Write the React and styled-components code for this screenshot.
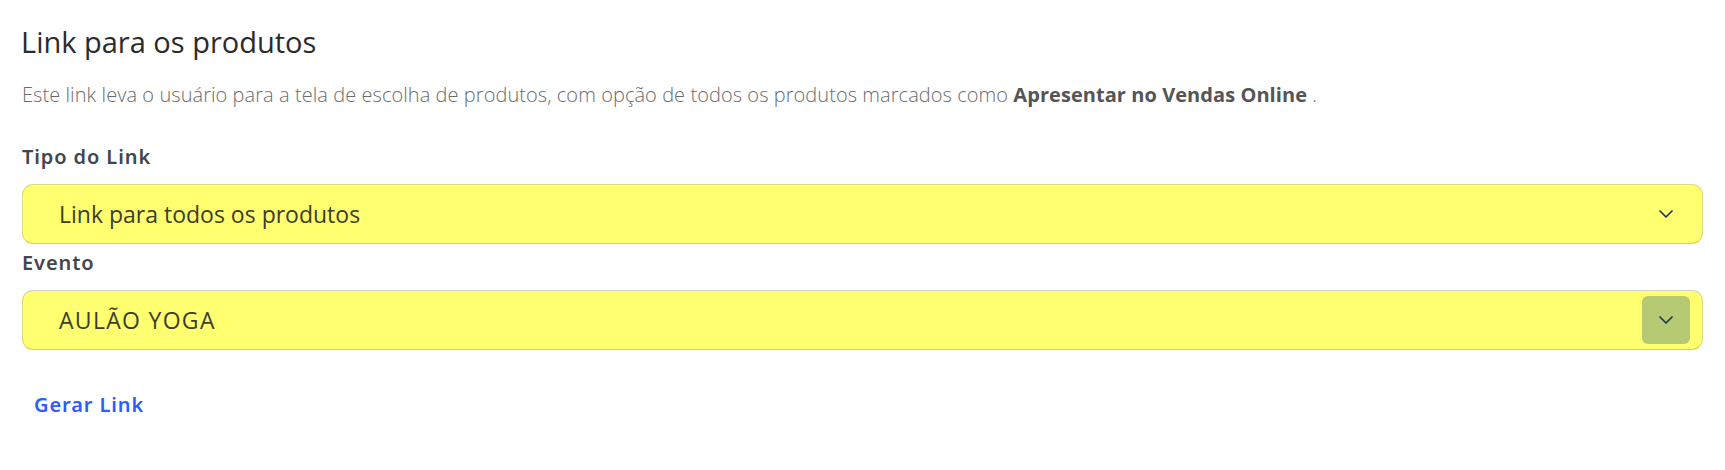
import React from "react";
import styled, { createGlobalStyle } from "styled-components";

const Global = createGlobalStyle`
  html, body { margin: 0; padding: 0; background: #ffffff; }
  * { box-sizing: border-box; }
`;

const Page = styled.div`
  padding: 25px 22px 40px 22px;
  font-family: "Open Sans", "Liberation Sans", sans-serif;
`;

const Title = styled.h2`
  margin: 0 0 0 -1px;
  font-size: 29px;
  line-height: 34px;
  font-weight: 400;
  color: #2b2b2b;
`;

const Description = styled.p`
  margin: 22px 0 0 0;
  font-size: 20px;
  line-height: 27px;
  font-weight: 300;
  letter-spacing: 0.06px;
  color: #6b6b6b;

  strong {
    font-weight: 700;
    color: #555555;
  }
`;

const Field = styled.div`
  display: flex;
  flex-direction: column;
  margin-top: ${(p) => p.$top}px;
`;

const Label = styled.label`
  font-family: "Noto Sans", "Liberation Sans", sans-serif;
  font-size: 20px;
  line-height: 22.8px;
  font-weight: 600;
  letter-spacing: 0.9px;
  color: #41464d;
  margin-bottom: 15px;
`;

const SelectBox = styled.div`
  position: relative;
  display: flex;
  align-items: center;
  height: 60px;
  padding: 0 12px 0 36px;
  background: #ffff70;
  border: 1px solid #dada7c;
  border-top-color: ${(p) => p.$topBorder};
  border-bottom-color: #d6d64e;
  border-radius: 11px;
`;

const SelectText = styled.span`
  flex: 1;
  font-size: 23px;
  letter-spacing: ${(p) => p.$tracking || 0}px;
  color: #3d3d2c;
  font-weight: 400;
`;

const ArrowBox = styled.span`
  display: flex;
  align-items: center;
  justify-content: center;
  width: 48px;
  height: 48px;
  border-radius: 6px;
  background: ${(p) => (p.$active ? "#b6ca74" : "transparent")};
`;

const Chevron = () => (
  <svg width="14" height="8" viewBox="0 0 14 8" fill="none">
    <polyline
      points="1,1 7,7 13,1"
      stroke="#1d3a55"
      strokeWidth="1.7"
      strokeLinecap="round"
      strokeLinejoin="round"
    />
  </svg>
);

const Button = styled.button`
  margin-top: 33px;
  padding: 8px 12px;
  background: transparent;
  border: none;
  font-family: "Noto Sans", "Liberation Sans", sans-serif;
  font-size: 20px;
  font-weight: 600;
  letter-spacing: 0.9px;
  color: #2a5cff;
  cursor: pointer;
`;

export default function App() {
  return (
    <>
      <Global />
      <Page>
        <Title>Link para os produtos</Title>
        <Description>
          Este link leva o usuário para a tela de escolha de produtos, com opção de todos os
          produtos marcados como <strong>Apresentar no Vendas Online</strong> .
        </Description>
        <Field $top={38}>
          <Label>Tipo do Link</Label>
          <SelectBox $topBorder="#dcdc84">
            <SelectText>Link para todos os produtos</SelectText>
            <ArrowBox>
              <Chevron />
            </ArrowBox>
          </SelectBox>
        </Field>
        <Field $top={8}>
          <Label>Evento</Label>
          <SelectBox $topBorder="#cfcfc4">
            <SelectText $tracking={1.3}>AULÃO YOGA</SelectText>
            <ArrowBox $active>
              <Chevron />
            </ArrowBox>
          </SelectBox>
        </Field>
        <Button>Gerar Link</Button>
      </Page>
    </>
  );
}
